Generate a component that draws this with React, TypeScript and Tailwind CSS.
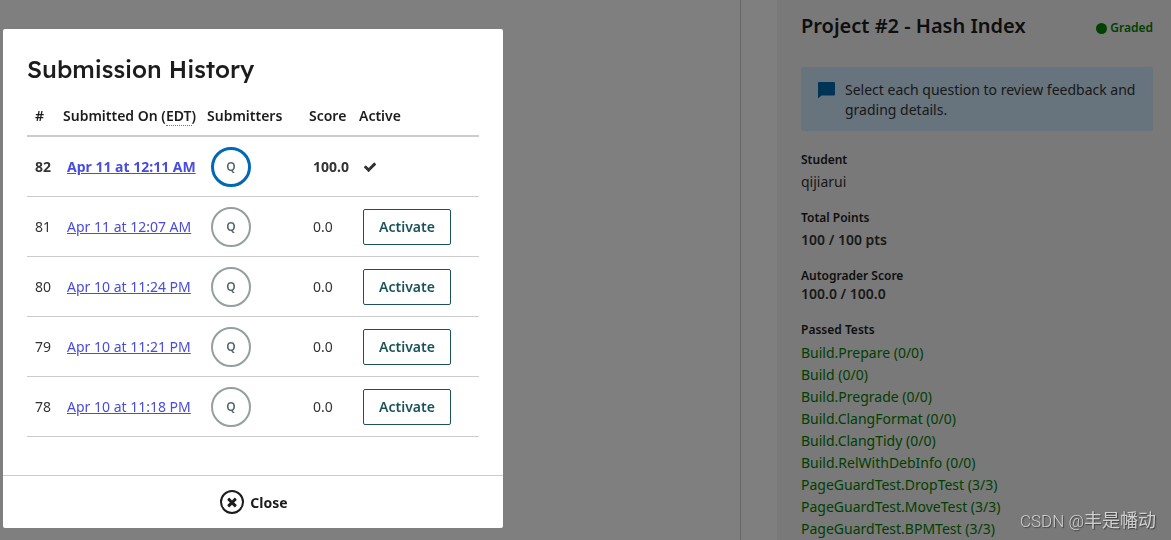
import React from 'react';

const submissions = [
  { id: 82, date: "Apr 11 at 12:11 AM", score: "100.0", active: true },
  { id: 81, date: "Apr 11 at 12:07 AM", score: "0.0", active: false },
  { id: 80, date: "Apr 10 at 11:24 PM", score: "0.0", active: false },
  { id: 79, date: "Apr 10 at 11:21 PM", score: "0.0", active: false },
  { id: 78, date: "Apr 10 at 11:18 PM", score: "0.0", active: false }
];

const passedTests = [
  "Build.Prepare (0/0)",
  "Build (0/0)",
  "Build.Pregrade (0/0)",
  "Build.ClangFormat (0/0)",
  "Build.ClangTidy (0/0)",
  "Build.RelWithDebInfo (0/0)",
  "PageGuardTest.DropTest (3/3)",
  "PageGuardTest.MoveTest (3/3)",
  "PageGuardTest.BPMTest (3/3)"
];

function CheckIcon() {
  return (
    <svg width="14" height="14" viewBox="0 0 1792 1792" fill="currentColor" role="img" aria-label="Active">
      <path d="M1671 566q0 40-28 68l-724 724-136 136q-28 28-68 28t-68-28l-136-136-362-362q-28-28-28-68t28-68l136-136q28-28 68-28t68 28l294 295 656-657q28-28 68-28t68 28l136 136q28 28 28 68z" />
    </svg>
  );
}

function TimesIcon() {
  return (
    <svg width="14" height="14" viewBox="0 0 1792 1792" fill="currentColor" aria-hidden="true">
      <path d="M1490 1322q0 40-28 68l-136 136q-28 28-68 28t-68-28l-294-294-294 294q-28 28-68 28t-68-28l-136-136q-28-28-28-68t28-68l294-294-294-294q-28-28-28-68t28-68l136-136q28-28 68-28t68 28l294 294 294-294q28-28 68-28t68 28l136 136q28 28 28 68t-28 68l-294 294 294 294q28 28 28 68z" />
    </svg>
  );
}

function ProjectSidebar() {
  return (
    <aside className="w-[394px] shrink-0 bg-[#f3f3f3] pl-6 pr-[18px] pt-3 text-sm text-[#333333]">
      <div className="flex items-center justify-between">
        <h1 className="text-xl leading-7 font-semibold text-[#1c1c1c]">Project #2 - Hash Index</h1>
        <span className="flex items-center gap-[3px] pt-1 text-xs font-semibold text-[#008000]">
          <span className="size-[11px] rounded-full bg-[#008000]" />
          Graded
        </span>
      </div>

      <div className="mt-[27px] flex gap-[10px] rounded-xs bg-[#cee7fa] pt-[13px] pr-3 pb-[11px] pl-[17px]">
        <svg className="mt-[2px] shrink-0" width="17" height="16" viewBox="0 0 17 16" fill="#0068ac">
          <path d="M1 0h15a1 1 0 0 1 1 1v11.5a1 1 0 0 1-1 1H3.5L0.6 15.9H0V1a1 1 0 0 1 1-1z" />
        </svg>
        <p className="leading-5">Select each question to review feedback and grading details.</p>
      </div>

      <dl className="mt-[21px]">
        <dt className="text-xs leading-4 font-semibold text-[#1c1c1c]">Student</dt>
        <dd className="mt-1 leading-5">qijiarui</dd>
        <dt className="mt-[18px] text-xs leading-4 font-semibold text-[#1c1c1c]">Total Points</dt>
        <dd className="mt-1 leading-5 font-semibold">100 / 100 pts</dd>
        <dt className="mt-[18px] text-xs leading-4 font-semibold text-[#1c1c1c]">Autograder Score</dt>
        <dd className="leading-5 font-semibold">100.0 / 100.0</dd>
        <dt className="mt-[18px] text-xs leading-4 font-semibold text-[#1c1c1c]">Passed Tests</dt>
        <dd className="mt-1">
          <ul>
            {passedTests.map((test) => (
              <li key={test} className="leading-[22px] text-[#008000]">{test}</li>
            ))}
          </ul>
        </dd>
      </dl>
    </aside>
  );
}

function SubmissionHistory() {
  return (
    <div role="dialog" aria-labelledby="history-title" className="w-[500px] rounded-xs bg-white text-sm text-[#333333]">
      <div className="px-6 pt-6 pb-[38px]">
        <h2 id="history-title" className="font-['Lexend','Inter',sans-serif] text-2xl leading-8 font-medium text-[#1c1c1c]">
          Submission History
        </h2>
        <table className="mt-3 w-full table-fixed border-separate border-spacing-0 text-left">
          <thead>
            <tr className="h-10 text-[#1c1c1c] *:border-b-2 *:border-[#cccccc] *:px-1 *:py-0 *:font-semibold *:whitespace-nowrap">
              <th className="w-8"><span className="pl-1">#</span></th>
              <th className="w-36">
                Submitted On (<abbr title="Eastern Daylight Time" className="border-b border-dotted border-[#777777] no-underline">EDT</abbr>)
              </th>
              <th className="w-[102px]">Submitters</th>
              <th className="w-[50px]">Score</th>
              <th>Active</th>
            </tr>
          </thead>
          <tbody>
            {submissions.map((item) => (
              <tr
                key={item.id}
                className={`h-[60px] *:border-b *:border-[#cccccc] *:py-0 *:pl-2 *:whitespace-nowrap ${item.active ? 'font-bold' : ''}`}
              >
                <td>{item.id}</td>
                <td>
                  <a href="#submission" className="text-[#484ce0] underline">{item.date}</a>
                </td>
                <td>
                  <span
                    className={`flex size-10 items-center justify-center rounded-full pt-px text-xs font-semibold text-[#56696a] ${
                      item.active ? 'border-3 border-[#0068b5]' : 'border-2 border-[#949f9f]'
                    }`}
                  >
                    Q
                  </span>
                </td>
                <td>{item.score}</td>
                <td>
                  {item.active ? (
                    <CheckIcon />
                  ) : (
                    <button className="block h-9 w-[88px] rounded-xs border border-[#1b5359] font-semibold text-[#1b5359]">
                      Activate
                    </button>
                  )}
                </td>
              </tr>
            ))}
          </tbody>
        </table>
      </div>

      <div className="flex justify-center border-t border-[#cccccc] py-[14px]">
        <button className="flex h-6 items-center gap-[6px] pl-0.5 font-bold text-[#1c1c1c]">
          <span className="flex size-6 items-center justify-center rounded-full border-2 border-[#1c1c1c]">
            <TimesIcon />
          </span>
          <span className="pt-0.5">Close</span>
        </button>
      </div>
    </div>
  );
}

export default function App() {
  return (
    <div className="relative h-screen overflow-hidden bg-white font-['Noto_Sans',sans-serif]">
      <div className="flex min-h-screen gap-9">
        <main className="flex-1 border-r border-[#cccccc]" />
        <ProjectSidebar />
      </div>

      {/* Modal */}
      <div className="fixed inset-0 bg-black/50 pt-[29px] pl-[3px]">
        <SubmissionHistory />
      </div>

      <span className="fixed right-[15px] bottom-[7px] font-['Roboto','Noto_Sans_CJK_SC',sans-serif] text-lg leading-6 text-[#d0d0d0] [text-shadow:1px_1px_1px_#404040]">
        <span className="text-[17px] font-light">CSDN @</span>丰是幡动
      </span>
    </div>
  );
}
